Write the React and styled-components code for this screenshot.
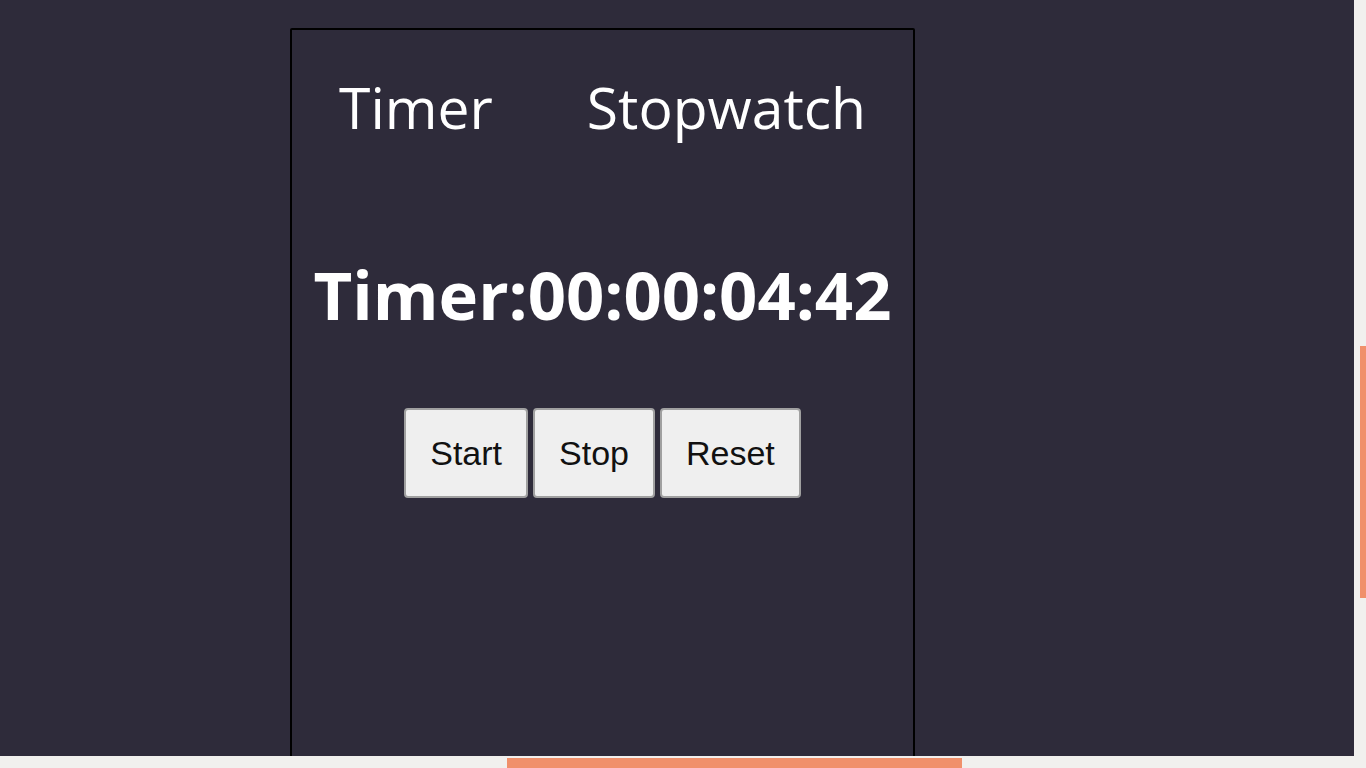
import styled, { createGlobalStyle } from "styled-components";

const c = {
  bg: "#2e2b3a",
  text: "#ffffff",
  track: "#f1f0ee",
  thumb: "#f0906b",
  btn: "#efefef",
};

const Global = createGlobalStyle`
  html, body {
    margin: 0;
    height: 100%;
    overflow: hidden;
    background: ${c.bg};
  }
`;

export default function App() {
  return (
    <>
      <Global />
      <Page>
        <Card>
          <Tabs>
            <Tab>Timer</Tab>
            <Tab>Stopwatch</Tab>
          </Tabs>
          <Display>Timer:00:00:04:42</Display>
          <Controls>
            <Button>Start</Button>
            <Button>Stop</Button>
            <Button>Reset</Button>
          </Controls>
        </Card>
      </Page>
      <VTrack>
        <VThumb />
      </VTrack>
      <HTrack>
        <HThumb />
      </HTrack>
    </>
  );
}

const Page = styled.main`
  padding: 28px 0 0 290px;
  height: 100vh;
  box-sizing: border-box;
  overflow: hidden;
`;

const Card = styled.section`
  width: 621px;
  height: 760px;
  border: 2px solid #000;
  border-radius: 2px;
  color: ${c.text};
  font-family: "Open Sans", "DejaVu Sans", sans-serif;
`;

const Tabs = styled.nav`
  display: flex;
  justify-content: space-around;
  padding-top: 41px;
`;

const Tab = styled.div`
  font-size: 57px;
  line-height: 72px;
`;

const Display = styled.h1`
  margin: 109px 0 0;
  text-align: center;
  font-size: 67px;
  line-height: 84px;
  font-weight: 700;
`;

const Controls = styled.div`
  display: flex;
  justify-content: center;
  gap: 5px;
  margin-top: 72px;
`;

const Button = styled.button`
  background: ${c.btn};
  border: 2px solid #a0a0a0;
  border-radius: 4px;
  padding: 0 24px;
  height: 90px;
  font-family: "Liberation Sans", Arial, sans-serif;
  font-size: 34px;
  color: #111;
`;

const VTrack = styled.div`
  position: fixed;
  top: 0;
  right: 0;
  width: 12px;
  height: 756px;
  background: ${c.track};
`;

const VThumb = styled.div`
  position: absolute;
  top: 346px;
  right: 0;
  width: 6px;
  height: 252px;
  background: ${c.thumb};
`;

const HTrack = styled.div`
  position: fixed;
  left: 0;
  bottom: 0;
  width: 100%;
  height: 12px;
  background: ${c.track};
`;

const HThumb = styled.div`
  position: absolute;
  left: 507px;
  bottom: 0;
  width: 455px;
  height: 10px;
  background: ${c.thumb};
`;
